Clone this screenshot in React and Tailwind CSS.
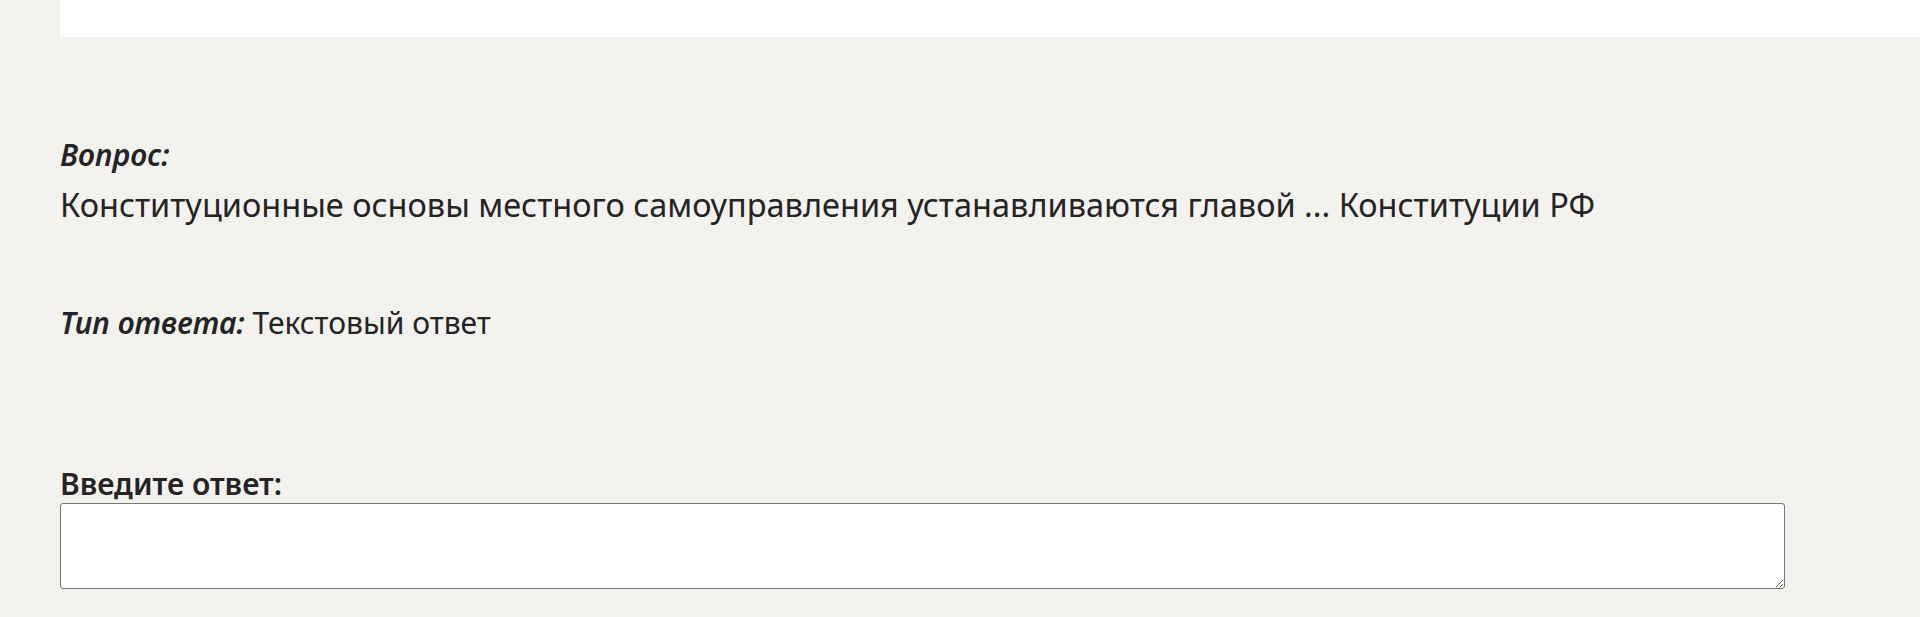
import React from 'react';

const font = { fontFamily: '"Noto Sans", "Open Sans", sans-serif' };

export default function App() {
  return (
    <div className="min-h-screen bg-[#f3f2ee] text-[#242424] pl-[60px]" style={font}>
      <div className="h-[37px] bg-white" />

      <div className="mt-[98px] text-[30px] leading-[40px] italic font-semibold">Вопрос:</div>
      <div className="mt-[8px] text-[32.5px] leading-[44px]">
        Конституционные основы местного самоуправления устанавливаются главой ... Конституции РФ
      </div>

      <div className="mt-[75px] text-[30px] leading-[42px]">
        <span className="italic font-semibold">Тип ответа:</span> Текстовый ответ
      </div>

      <div className="mt-[121px] text-[30px] leading-[38px] font-semibold">Введите ответ:</div>
      <textarea className="block w-[1725px] h-[86px] bg-white border border-[#767676] rounded-[3px] resize-y" />
    </div>
  );
}
